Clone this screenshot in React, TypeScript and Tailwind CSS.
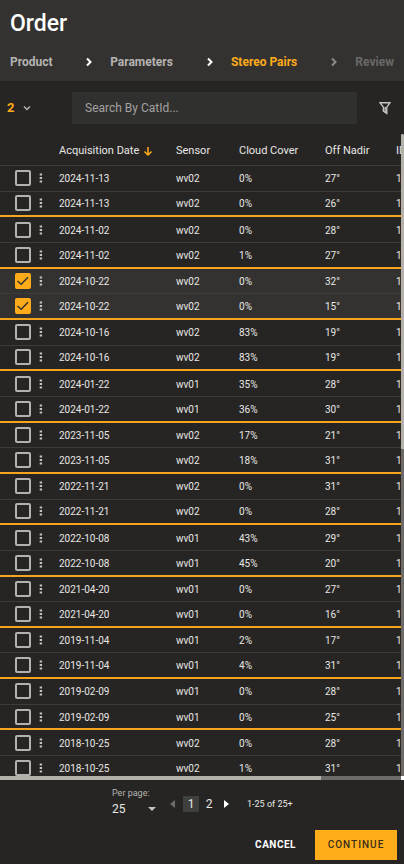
import { useState } from "react";

type Pair = {
  date: string;
  sensor: string;
  cloud: [number, number];
  nadir: [number, number];
};

const PAIRS: Pair[] = [
  { date: "2024-11-13", sensor: "wv02", cloud: [0, 0], nadir: [27, 26] },
  { date: "2024-11-02", sensor: "wv02", cloud: [0, 1], nadir: [28, 27] },
  { date: "2024-10-22", sensor: "wv02", cloud: [0, 0], nadir: [32, 15] },
  { date: "2024-10-16", sensor: "wv02", cloud: [83, 83], nadir: [19, 19] },
  { date: "2024-01-22", sensor: "wv01", cloud: [35, 36], nadir: [28, 30] },
  { date: "2023-11-05", sensor: "wv02", cloud: [17, 18], nadir: [21, 31] },
  { date: "2022-11-21", sensor: "wv02", cloud: [0, 0], nadir: [31, 28] },
  { date: "2022-10-08", sensor: "wv01", cloud: [43, 45], nadir: [29, 20] },
  { date: "2021-04-20", sensor: "wv01", cloud: [0, 0], nadir: [27, 16] },
  { date: "2019-11-04", sensor: "wv01", cloud: [2, 4], nadir: [17, 31] },
  { date: "2019-02-09", sensor: "wv01", cloud: [0, 0], nadir: [28, 25] },
  { date: "2018-10-25", sensor: "wv02", cloud: [0, 1], nadir: [28, 31] },
];

function Chevron({ className }: { className: string }) {
  return (
    <svg viewBox="0 0 8 10" className={`h-[10px] w-2 shrink-0 ${className}`} fill="none" stroke="currentColor" strokeWidth="2" aria-hidden="true">
      <path d="M2 1.5 5.5 5 2 8.5" />
    </svg>
  );
}

function Steps() {
  return (
    <nav aria-label="Order steps" className="flex items-center justify-between pr-[10px] pl-[10px] text-[12px] leading-4 font-bold text-[#b5b4b2]">
      <button type="button" className="w-[42px] text-left">Product</button>
      <Chevron className="ml-4 text-white" />
      <button type="button">Parameters</button>
      <Chevron className="ml-4 text-white" />
      <button type="button" aria-current="step" className="text-[#ffab1a]">Stereo Pairs</button>
      <Chevron className="ml-4 text-[#8b8a88]" />
      <button type="button" disabled className="text-[#6a6968]">Review</button>
    </nav>
  );
}

function Toolbar() {
  return (
    <div className="flex h-[53px] shrink-0 items-center">
      <button type="button" aria-label="2 selected" className="flex w-[72px] items-center gap-2 pl-[7px] text-[13px] leading-4 font-bold text-[#ffab1a]">
        2
        <svg viewBox="0 0 10 8" className="h-2 w-[10px] text-[#b5b4b2]" fill="none" stroke="currentColor" strokeWidth="1.5" aria-hidden="true">
          <path d="M2 2.5 5 5.5 8 2.5" />
        </svg>
      </button>
      <input
        type="text"
        aria-label="Search By CatId"
        placeholder="Search By CatId..."
        className="h-8 min-w-0 flex-1 bg-[#30302f] px-[13px] text-[12px] text-white outline-none placeholder:text-[#a3a2a0]"
      />
      <button type="button" aria-label="Filter" className="flex w-[47px] justify-center pl-2">
        <svg viewBox="0 0 12 14" className="h-[14px] w-3 text-[#c5c4c2]" fill="none" stroke="currentColor" strokeWidth="1.4" aria-hidden="true">
          <path d="M1 1.7H11L7.8 6.2V12.5L4.4 10.2V6.2Z" />
          <path d="M6.2 6V11.5" />
        </svg>
      </button>
    </div>
  );
}

function Row({ pair, index, checked, onToggle }: { pair: Pair; index: 0 | 1; checked: boolean; onToggle: () => void }) {
  const line = index === 1 ? "*:border-b-2 *:border-[#f5a51c]" : "*:border-b *:border-[#3d3c3b]";
  return (
    <tr className={`h-[25px] *:p-0 [&>td+td]:pt-[2px] ${line} ${checked ? "bg-[#333231]" : ""}`}>
      <td>
        <div className="flex h-4 items-center pl-[15px]">
          <span className="relative flex size-4">
            <input
              type="checkbox"
              aria-label={`Select ${pair.date} image ${index + 1}`}
              checked={checked}
              onChange={onToggle}
              className="size-4 appearance-none rounded-[2px] border-2 border-[#b3b2b0] checked:border-[#ffab1a] checked:bg-[#ffab1a]"
            />
            {checked && (
              <svg viewBox="0 0 16 16" className="pointer-events-none absolute inset-0 size-4" fill="none" stroke="#333231" strokeWidth="1.5" aria-hidden="true">
                <path d="M2.5 8 6.2 11.3 13 4.3" />
              </svg>
            )}
          </span>
          <button type="button" aria-label="Row actions" className="ml-2 text-[#c5c4c2]">
            <svg viewBox="0 0 4 10" className="block h-[10px] w-1" fill="currentColor" aria-hidden="true">
              <rect x="0.7" y="0.5" width="2.4" height="2" />
              <rect x="0.7" y="4" width="2.4" height="2" />
              <rect x="0.7" y="7.5" width="2.4" height="2" />
            </svg>
          </button>
        </div>
      </td>
      <td>{pair.date}</td>
      <td>{pair.sensor}</td>
      <td>{pair.cloud[index]}%</td>
      <td>{pair.nadir[index]}°</td>
      <td>1</td>
    </tr>
  );
}

function PairsTable() {
  const [selected, setSelected] = useState<string[]>(["2024-10-22-0", "2024-10-22-1"]);
  const toggle = (key: string) =>
    setSelected((keys) => (keys.includes(key) ? keys.filter((k) => k !== key) : [...keys, key]));

  return (
    <div className="grid min-h-0 flex-1 grid-cols-[minmax(0,1fr)_3px] grid-rows-[minmax(0,1fr)_4px]">
      <div className="overflow-hidden">
        <table className="h-[648px] w-[500px] table-fixed border-separate border-spacing-0 text-left text-[10px] leading-4 text-[#e8e7e5]">
          <colgroup>
            <col className="w-[59px]" />
            <col className="w-[117px]" />
            <col className="w-[63px]" />
            <col className="w-[86px]" />
            <col className="w-[71px]" />
            <col />
          </colgroup>
          <thead>
            <tr className="h-8 text-[11px] *:border-b *:border-[#3d3c3b] *:p-0 *:pt-[2px] *:font-normal">
              <th aria-label="Select" />
              <th aria-sort="descending">
                <button type="button" className="flex items-center gap-1">
                  Acquisition Date
                  <svg viewBox="0 0 10 10" className="size-[10px] text-[#ffab1a]" fill="none" stroke="currentColor" strokeWidth="1.5" aria-hidden="true">
                    <path d="M5 1V9M1.5 5.5 5 9 8.5 5.5" />
                  </svg>
                </button>
              </th>
              <th>Sensor</th>
              <th>Cloud Cover</th>
              <th>Off Nadir</th>
              <th>ID</th>
            </tr>
          </thead>
          <tbody>
            {PAIRS.flatMap((pair) =>
              ([0, 1] as const).map((index) => {
                const key = `${pair.date}-${index}`;
                return <Row key={key} pair={pair} index={index} checked={selected.includes(key)} onToggle={() => toggle(key)} />;
              }),
            )}
          </tbody>
        </table>
      </div>
      <div className="bg-[#6c6b68]">
        <div className="h-[49%] rounded-t-xs bg-[#b3b1aa]" />
      </div>
      <div className="bg-[#6c6b68]">
        <div className="h-full w-4/5 bg-[#b3b1aa]" />
      </div>
      <div className="bg-white" />
    </div>
  );
}

function Pagination() {
  return (
    <div className="flex h-[50px] items-start pl-28 text-[12px] leading-4 text-[#e8e7e5]">
      <div className="flex w-11 flex-col pt-[5px]">
        <label htmlFor="per-page" className="text-[9px] text-[#b5b4b2]">Per page:</label>
        <div className="relative">
          <select id="per-page" defaultValue="25" className="block w-full appearance-none bg-transparent outline-none">
            <option>25</option>
            <option>50</option>
          </select>
          <svg viewBox="0 0 8 4" className="pointer-events-none absolute top-[6px] right-0 h-1 w-2" aria-hidden="true">
            <path d="M0 0H8L4 4Z" fill="#c5c4c2" />
          </svg>
        </div>
      </div>
      <div className="flex items-center pt-4 pl-[14px]">
        <button type="button" aria-label="Previous page" disabled>
          <svg viewBox="0 0 6 8" className="block h-2 w-[6px]" aria-hidden="true"><path d="M5 0V8L0 4Z" fill="#6c6b69" /></svg>
        </button>
        <button type="button" aria-current="page" className="ml-[7px] size-4 bg-[#3f3f3e]">1</button>
        <button type="button" className="ml-1 w-3">2</button>
        <button type="button" aria-label="Next page" className="ml-[9px]">
          <svg viewBox="0 0 6 8" className="block h-2 w-[6px]" aria-hidden="true"><path d="M0 0V8L5 4Z" fill="#fff" /></svg>
        </button>
        <span className="ml-[17px] text-[9px] whitespace-nowrap">1-25 of 25+</span>
      </div>
    </div>
  );
}

export default function App() {
  return (
    <main className="flex h-screen flex-col overflow-hidden bg-[#262524] font-['Roboto',sans-serif]">
      <header className="shrink-0 bg-[#333231] pt-2 pb-[11px]">
        <h1 className="mb-[14px] pl-[10px] text-[23px] leading-8 font-medium text-white">Order</h1>
        <Steps />
      </header>
      <Toolbar />
      <PairsTable />
      <footer className="shrink-0">
        <Pagination />
        <div className="flex items-center justify-end gap-[19px] pr-[7px] pb-1 text-[10px] leading-4 font-bold">
          <button type="button" className="tracking-wider text-white">CANCEL</button>
          <button type="button" className="h-[30px] w-[82px] bg-[#ffae1a] font-medium tracking-widest text-[#3a2f1c]">CONTINUE</button>
        </div>
      </footer>
    </main>
  );
}
